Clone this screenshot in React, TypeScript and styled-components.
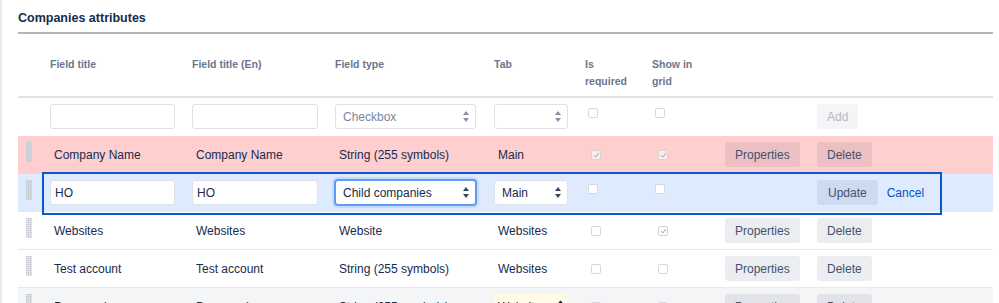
import React from "react";
import styled, { createGlobalStyle, css } from "styled-components";

const GlobalStyle = createGlobalStyle`
  html, body { margin: 0; padding: 0; background: #fff; overflow: hidden; }
  body {
    font-family: "Liberation Sans", Arial, Helvetica, sans-serif;
    color: #172b4d;
  }
  * { box-sizing: border-box; }
`;

const COLS = "24px 142px 143px 159px 91px 67px 73px 92px 1fr";

const Page = styled.div`
  height: 303px;
  border-left: 2px solid #e9eaee;
  padding: 8px 6px 0 16px;
  overflow: hidden;
`;

const Title = styled.h2`
  margin: 0;
  font-size: 12.5px;
  font-weight: 700;
  line-height: 20px;
  padding-bottom: 4px;
  border-bottom: 2px solid #b3b7bd;
  color: #172b4d;
`;

const HeaderRow = styled.div`
  display: grid;
  grid-template-columns: ${COLS};
  align-items: start;
  height: 64px;
  padding-top: 22px;
  border-bottom: 2px solid #dfe1e6;
`;

const HeaderCell = styled.div`
  padding-left: 8px;
  font-size: 10.5px;
  font-weight: 700;
  line-height: 17px;
  color: #6b778c;
`;

const NewRow = styled.div`
  display: grid;
  grid-template-columns: ${COLS};
  align-items: start;
  height: 38px;
  padding-top: 6px;
`;

type Tone = "danger" | "plain" | "muted";

const toneBg: Record<Tone, string> = {
  danger: "#ffcfcf",
  plain: "#ffffff",
  muted: "#f4f5f7",
};

const DataRow = styled.div<{ $tone: Tone }>`
  display: grid;
  grid-template-columns: ${COLS};
  align-items: center;
  height: 38px;
  background: ${(p) => toneBg[p.$tone]};
  border-bottom: 1px solid ${(p) => (p.$tone === "danger" ? "#ffcfcf" : "#e8e9ed")};
`;

const EditRow = styled.div`
  position: relative;
  display: grid;
  grid-template-columns: ${COLS};
  align-items: start;
  height: 38px;
  padding-top: 6px;
  background: #deebff;
  border-bottom: 1px solid #e3e6ea;
`;

const FocusFrame = styled.div`
  position: absolute;
  top: -2px;
  left: 24px;
  width: 900px;
  height: 43px;
  border: 2px solid #0b57d0;
  pointer-events: none;
  z-index: 2;
`;

const Cell = styled.div`
  padding-left: 8px;
  min-width: 0;
  display: flex;
  align-items: center;
  gap: 9px;
`;

const HandleCell = styled.div`
  padding-left: 8px;
  align-self: start;
  margin-top: 6px;
`;

const CellText = styled.span`
  padding-left: 4px;
  font-size: 12px;
  line-height: 16px;
  color: #172b4d;
  white-space: nowrap;
`;

const InlineEdit = styled.span<{ $w: number }>`
  display: flex;
  align-items: center;
  justify-content: space-between;
  width: ${(p) => p.$w}px;
  height: 26px;
  padding: 0 4px;
  background: #fffae6;
  font-size: 12px;
  color: #172b4d;
`;

const TextInput = styled.input<{ $w: number }>`
  width: ${(p) => p.$w}px;
  height: 25px;
  margin: 0;
  padding: 0 4px;
  border: 1px solid #dfe1e6;
  border-radius: 3px;
  background: #fff;
  font-family: inherit;
  font-size: 12px;
  color: #172b4d;
  outline: none;
`;

const SelectBox = styled.div<{ $w: number; $focused?: boolean; $placeholder?: boolean }>`
  width: ${(p) => p.$w}px;
  height: 25px;
  display: flex;
  align-items: center;
  justify-content: space-between;
  padding: 0 6px 0 7px;
  border: 1px solid #dfe1e6;
  border-radius: 3px;
  background: #fff;
  font-size: 12px;
  color: ${(p) => (p.$placeholder ? "#7a869a" : "#172b4d")};
  ${(p) =>
    p.$focused &&
    css`
      border-color: #5b9bf0;
      box-shadow: 0 0 0 1px #5b9bf0, 0 0 0 3px rgba(91, 155, 240, 0.18);
    `}
`;

const Box = styled.span<{ $edit?: boolean; $checked?: boolean }>`
  display: inline-flex;
  align-items: center;
  justify-content: center;
  width: 10px;
  height: 10px;
  margin-left: ${(p) => (p.$edit ? 3 : 6)}px;
  margin-top: ${(p) => (p.$edit ? 4 : 0)}px;
  align-self: ${(p) => (p.$edit ? "start" : "center")};
  border: 1px solid ${(p) => (p.$checked ? "#d3d5da" : "#d5d8dd")};
  border-radius: 2px;
  background: ${(p) => (p.$checked ? "rgba(255,255,255,0.55)" : "#fff")};
`;

const Button = styled.button<{ $disabled?: boolean }>`
  height: 25px;
  padding: 0 10px;
  margin: 0;
  border: none;
  border-radius: 3px;
  font-family: inherit;
  font-size: 12px;
  color: ${(p) => (p.$disabled ? "#b3bac5" : "#42526e")};
  background: ${(p) => (p.$disabled ? "#f4f5f7" : "rgba(9, 30, 66, 0.08)")};
  cursor: pointer;
  white-space: nowrap;
`;

const LinkButton = styled.a`
  font-size: 12px;
  color: #0052cc;
  text-decoration: none;
  cursor: pointer;
`;

const Grip = () => {
  const dots: React.ReactNode[] = [];
  for (let x = 0; x < 3; x++) {
    for (let y = 0; y < 10; y++) {
      dots.push(<rect key={`${x}-${y}`} x={x * 2} y={y * 2} width={1.4} height={1.4} fill="#c5c9cf" />);
    }
  }
  return (
    <svg width="6" height="20" viewBox="0 0 6 20" style={{ display: "block" }}>
      <rect x="0" y="0" width="6" height="20" fill="rgba(200,204,210,0.35)" />
      {dots}
    </svg>
  );
};

const Arrows = ({ light }: { light?: boolean }) => (
  <svg width="6" height="11" viewBox="0 0 6 11">
    <path d="M3 0 L6 4 L0 4 Z" fill={light ? "#8993a4" : "#344563"} />
    <path d="M3 11 L6 7 L0 7 Z" fill={light ? "#8993a4" : "#344563"} />
  </svg>
);

const Check = ({ checked, edit }: { checked?: boolean; edit?: boolean }) => (
  <Box $checked={checked} $edit={edit}>
    {checked && (
      <svg width="7" height="6" viewBox="0 0 7 6">
        <path d="M1 3.2 L2.8 5 L6 1" stroke="#9aa0a8" strokeWidth="1" fill="none" />
      </svg>
    )}
  </Box>
);

const Pencil = () => (
  <svg width="9" height="14" viewBox="0 0 9 14">
    <path d="M6.2 0.5 L8.5 2.2 L3 10 L0.6 8.4 Z" fill="#172b4d" />
    <path d="M0.6 8.4 L3 10 L0.3 12 Z" fill="#172b4d" />
  </svg>
);

type Item = {
  title: string;
  titleEn: string;
  type: string;
  tab: string;
  required: boolean;
  grid: boolean;
  tone: Tone;
  hoverTab?: boolean;
};

const items: Item[] = [
  { title: "Websites", titleEn: "Websites", type: "Website", tab: "Websites", required: false, grid: true, tone: "plain" },
  { title: "Test account", titleEn: "Test account", type: "String (255 symbols)", tab: "Websites", required: false, grid: false, tone: "plain" },
  { title: "Password", titleEn: "Password", type: "String (255 symbols)", tab: "Websites", required: false, grid: false, tone: "muted", hoverTab: true },
];

const DisplayRow = ({ item }: { item: Item }) => (
  <DataRow $tone={item.tone}>
    <HandleCell>
      <Grip />
    </HandleCell>
    <Cell>
      <CellText>{item.title}</CellText>
    </Cell>
    <Cell>
      <CellText>{item.titleEn}</CellText>
    </Cell>
    <Cell>
      <CellText>{item.type}</CellText>
    </Cell>
    <Cell>
      {item.hoverTab ? (
        <InlineEdit $w={73}>
          {item.tab}
          <Pencil />
        </InlineEdit>
      ) : (
        <CellText>{item.tab}</CellText>
      )}
    </Cell>
    <Cell>
      <Check checked={item.required} />
    </Cell>
    <Cell>
      <Check checked={item.grid} />
    </Cell>
    <Cell>
      <Button>Properties</Button>
    </Cell>
    <Cell>
      <Button>Delete</Button>
    </Cell>
  </DataRow>
);

export default function App() {
  return (
    <>
      <GlobalStyle />
      <Page>
        <Title>Companies attributes</Title>

        <HeaderRow>
          <HeaderCell />
          <HeaderCell>Field title</HeaderCell>
          <HeaderCell>Field title (En)</HeaderCell>
          <HeaderCell>Field type</HeaderCell>
          <HeaderCell>Tab</HeaderCell>
          <HeaderCell>
            Is
            <br />
            required
          </HeaderCell>
          <HeaderCell>
            Show in
            <br />
            grid
          </HeaderCell>
          <HeaderCell />
          <HeaderCell />
        </HeaderRow>

        <NewRow>
          <div />
          <Cell>
            <TextInput $w={125} readOnly value="" />
          </Cell>
          <Cell>
            <TextInput $w={126} readOnly value="" />
          </Cell>
          <Cell>
            <SelectBox $w={141} $placeholder>
              Checkbox
              <Arrows light />
            </SelectBox>
          </Cell>
          <Cell>
            <SelectBox $w={74}>
              <span />
              <Arrows light />
            </SelectBox>
          </Cell>
          <Cell>
            <Check edit />
          </Cell>
          <Cell>
            <Check edit />
          </Cell>
          <Cell />
          <Cell>
            <Button $disabled>Add</Button>
          </Cell>
        </NewRow>

        <DisplayRow
          item={{
            title: "Company Name",
            titleEn: "Company Name",
            type: "String (255 symbols)",
            tab: "Main",
            required: true,
            grid: true,
            tone: "danger",
          }}
        />

        <EditRow>
          <HandleCell style={{ marginTop: 0 }}>
            <Grip />
          </HandleCell>
          <Cell>
            <TextInput $w={125} readOnly value="HO" />
          </Cell>
          <Cell>
            <TextInput $w={126} readOnly value="HO" />
          </Cell>
          <Cell>
            <SelectBox $w={141} $focused>
              Child companies
              <Arrows />
            </SelectBox>
          </Cell>
          <Cell>
            <SelectBox $w={74}>
              Main
              <Arrows />
            </SelectBox>
          </Cell>
          <Cell>
            <Check edit />
          </Cell>
          <Cell>
            <Check edit />
          </Cell>
          <Cell />
          <Cell>
            <Button style={{ padding: "0 11px" }}>Update</Button>
            <LinkButton>Cancel</LinkButton>
          </Cell>
          <FocusFrame />
        </EditRow>

        {items.map((it) => (
          <DisplayRow key={it.title} item={it} />
        ))}
      </Page>
    </>
  );
}
